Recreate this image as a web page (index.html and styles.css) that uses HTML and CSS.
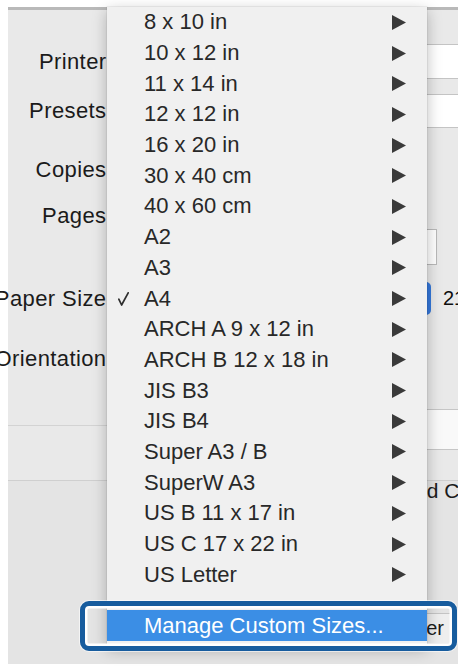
FILE: index.html
```html
<!DOCTYPE html>
<html lang="en">
<head>
<meta charset="utf-8">
<title>Paper Size menu</title>
<link rel="stylesheet" href="styles.css">
</head>
<body>
<div class="dialog">
  <div class="row r-printer">
    <div class="label"><span>Printer:</span></div>
    <div class="popup wide"></div>
  </div>
  <div class="row r-presets">
    <div class="label"><span>Presets:</span></div>
    <div class="popup wide"></div>
  </div>
  <div class="row r-copies">
    <div class="label"><span>Copies:</span></div>
    <div class="field small"></div>
  </div>
  <div class="row r-pages">
    <div class="label"><span>Pages:</span></div>
  </div>
  <div class="row r-from">
    <div class="label"></div>
    <div class="from-ctrl">
      <div class="field mini"></div>
      <div class="field to"></div>
    </div>
  </div>
  <div class="row r-paper">
    <div class="label"><span>Paper Size:</span></div>
    <div class="popup paper"><span class="cap"></span></div>
    <span class="dims">21 by 29.7 cm</span>
  </div>
  <div class="row r-orient">
    <div class="label"><span>Orientation:</span></div>
  </div>
  <div class="section-bar">
    <div class="popup section"></div>
  </div>
  <div class="group">
    <div class="r-adv">Advanced Color Settings</div>
    <div class="r-btn"><span class="btn">Printer</span></div>
  </div>
</div>

<div class="menu">
  <div class="item"><span class="check"></span><span class="txt">8 x 10 in</span><svg class="arrow" viewBox="0 0 14 15"><polygon points="0,0 14,7.5 0,15"/></svg></div>
  <div class="item"><span class="check"></span><span class="txt">10 x 12 in</span><svg class="arrow" viewBox="0 0 14 15"><polygon points="0,0 14,7.5 0,15"/></svg></div>
  <div class="item"><span class="check"></span><span class="txt">11 x 14 in</span><svg class="arrow" viewBox="0 0 14 15"><polygon points="0,0 14,7.5 0,15"/></svg></div>
  <div class="item"><span class="check"></span><span class="txt">12 x 12 in</span><svg class="arrow" viewBox="0 0 14 15"><polygon points="0,0 14,7.5 0,15"/></svg></div>
  <div class="item"><span class="check"></span><span class="txt">16 x 20 in</span><svg class="arrow" viewBox="0 0 14 15"><polygon points="0,0 14,7.5 0,15"/></svg></div>
  <div class="item"><span class="check"></span><span class="txt">30 x 40 cm</span><svg class="arrow" viewBox="0 0 14 15"><polygon points="0,0 14,7.5 0,15"/></svg></div>
  <div class="item"><span class="check"></span><span class="txt">40 x 60 cm</span><svg class="arrow" viewBox="0 0 14 15"><polygon points="0,0 14,7.5 0,15"/></svg></div>
  <div class="item"><span class="check"></span><span class="txt">A2</span><svg class="arrow" viewBox="0 0 14 15"><polygon points="0,0 14,7.5 0,15"/></svg></div>
  <div class="item"><span class="check"></span><span class="txt">A3</span><svg class="arrow" viewBox="0 0 14 15"><polygon points="0,0 14,7.5 0,15"/></svg></div>
  <div class="item"><span class="check"><svg class="tick" viewBox="0 0 11 14"><path d="M0.8 7.2 L3.6 13 L10.2 0.8"/></svg></span><span class="txt">A4</span><svg class="arrow" viewBox="0 0 14 15"><polygon points="0,0 14,7.5 0,15"/></svg></div>
  <div class="item"><span class="check"></span><span class="txt">ARCH A 9 x 12 in</span><svg class="arrow" viewBox="0 0 14 15"><polygon points="0,0 14,7.5 0,15"/></svg></div>
  <div class="item"><span class="check"></span><span class="txt">ARCH B 12 x 18 in</span><svg class="arrow" viewBox="0 0 14 15"><polygon points="0,0 14,7.5 0,15"/></svg></div>
  <div class="item"><span class="check"></span><span class="txt">JIS B3</span><svg class="arrow" viewBox="0 0 14 15"><polygon points="0,0 14,7.5 0,15"/></svg></div>
  <div class="item"><span class="check"></span><span class="txt">JIS B4</span><svg class="arrow" viewBox="0 0 14 15"><polygon points="0,0 14,7.5 0,15"/></svg></div>
  <div class="item"><span class="check"></span><span class="txt">Super A3 / B</span><svg class="arrow" viewBox="0 0 14 15"><polygon points="0,0 14,7.5 0,15"/></svg></div>
  <div class="item"><span class="check"></span><span class="txt">SuperW A3</span><svg class="arrow" viewBox="0 0 14 15"><polygon points="0,0 14,7.5 0,15"/></svg></div>
  <div class="item"><span class="check"></span><span class="txt">US B 11 x 17 in</span><svg class="arrow" viewBox="0 0 14 15"><polygon points="0,0 14,7.5 0,15"/></svg></div>
  <div class="item"><span class="check"></span><span class="txt">US C 17 x 22 in</span><svg class="arrow" viewBox="0 0 14 15"><polygon points="0,0 14,7.5 0,15"/></svg></div>
  <div class="item"><span class="check"></span><span class="txt">US Letter</span><svg class="arrow" viewBox="0 0 14 15"><polygon points="0,0 14,7.5 0,15"/></svg></div>
  <div class="sep"></div>
  <div class="item active"><span class="check"></span><span class="txt">Manage Custom Sizes...</span></div>
</div>

<div class="callout"></div>
</body>
</html>
```

FILE: styles.css
```css
html, body {
  margin: 0;
  padding: 0;
}

body {
  width: 462px;
  height: 668px;
  box-sizing: border-box;
  padding: 7px 0 0 8px;
  background: #ffffff;
  position: relative;
  overflow: hidden;
  font-family: "Liberation Sans", Arial, sans-serif;
}

/* ---------- underlying print dialog ---------- */
.dialog {
  width: 450px;
  height: 657px;
  box-sizing: border-box;
  border-top: 3px solid #b9b9b9;
  background: #e9e9e9;
  display: flex;
  flex-direction: column;
}

.row {
  display: flex;
  align-items: center;
  flex-shrink: 0;
}

.label {
  width: 105px;
  margin-right: 10px;
  flex-shrink: 0;
  display: flex;
  justify-content: flex-end;
  font-size: 22px;
  letter-spacing: 0.4px;
  color: #1b1b1b;
  white-space: nowrap;
}

.popup {
  box-sizing: border-box;
  background: #ffffff;
}

.popup.wide {
  flex: 1;
  align-self: stretch;
  border: 1px solid #c4c4c4;
  border-right: none;
}

.field {
  box-sizing: border-box;
  background: #ffffff;
  border: 1px solid #b9b9b9;
}

.field.small { width: 56px; height: 30px; }
.field.mini { width: 50px; height: 32px; }
.field.to { width: 60px; height: 36px; }

.r-printer { margin-top: 34px; height: 35px; }
.r-presets { margin-top: 15px; height: 34px; }
.r-copies { margin-top: 26px; height: 32px; }
.r-pages { margin-top: 16px; height: 27px; }
.r-from { height: 36px; }
.r-paper { margin-top: 17px; height: 33px; }
.r-orient { margin-top: 28px; height: 32px; }

.from-ctrl {
  width: 314px;
  display: flex;
  justify-content: flex-end;
  align-items: center;
  gap: 60px;
}

.popup.paper {
  width: 308px;
  height: 33px;
  display: flex;
  border: 1px solid #c4c4c4;
  border-radius: 5px;
}

.cap {
  margin-left: auto;
  width: 22px;
  margin: -1px -1px -1px auto;
  background: #3478dc;
  border-radius: 0 5px 5px 0;
}

.dims {
  flex: 1;
  min-width: 0;
  overflow: hidden;
  margin-left: 12px;
  font-size: 20px;
  color: #0e0e0e;
  white-space: nowrap;
}

.section-bar {
  margin-top: 34px;
  height: 41px;
  flex-shrink: 0;
  display: flex;
  background: linear-gradient(to bottom, transparent 16px, #d3d3d3 16px, #d3d3d3 17px, transparent 17px);
}

.popup.section {
  margin-left: 250px;
  flex: 1;
  border: 1px solid #c6c6c6;
  border-right: none;
  background: #f9f9f9;
}

.group {
  margin-top: 30px;
  flex: 1;
  border-top: 1px solid #cfcfcf;
  background: #e4e4e4;
  display: flex;
  flex-direction: column;
}

.r-adv {
  height: 20px;
  line-height: 20px;
  padding-left: 337px;
  font-size: 21px;
  color: #1b1b1b;
  white-space: nowrap;
  overflow: hidden;
}

.r-btn {
  margin-top: 112px;
  height: 30px;
  display: flex;
  justify-content: flex-end;
}

.btn {
  margin-right: 6px;
  padding: 0 8px 0 12px;
  display: flex;
  align-items: center;
  background: #eeeeee;
  border-top: 1px solid #c4c4c4;
  font-size: 20px;
  color: #1b1b1b;
}

/* ---------- pop-up menu (overlay) ---------- */
.menu {
  position: absolute;
  left: 107px;
  top: 7px;
  width: 320px;
  padding-bottom: 5px;
  background: #f0f0f0;
  box-shadow: 0 4px 14px rgba(0, 0, 0, 0.26), 0 0 0 0.5px rgba(0, 0, 0, 0.1);
  font-size: 22px;
  color: #282828;
}

.item {
  height: 30.7px;
  display: flex;
  align-items: center;
  padding: 0 21px 0 11px;
  white-space: nowrap;
}

.check {
  width: 26px;
  flex-shrink: 0;
  display: flex;
  align-items: center;
}

.tick {
  width: 11px;
  height: 14px;
}

.tick path {
  fill: none;
  stroke: #2e2e2e;
  stroke-width: 1.7;
  stroke-linecap: round;
  stroke-linejoin: round;
}

.arrow {
  margin-left: auto;
  width: 14px;
  height: 15px;
  fill: #3a3a3a;
}

.sep {
  height: 19.7px;
}

.item.active {
  height: 31.5px;
  background: #3b8ee5;
  color: #ffffff;
}

/* ---------- annotation frame (overlay) ---------- */
.callout {
  position: absolute;
  left: 80px;
  top: 601px;
  width: 377px;
  height: 50px;
  box-sizing: border-box;
  border: 5px solid #175c9e;
  border-radius: 9px;
  box-shadow: inset 0 0 0 2.5px #ffffff, 0 0 0 1px rgba(255, 255, 255, 0.6);
}
```
